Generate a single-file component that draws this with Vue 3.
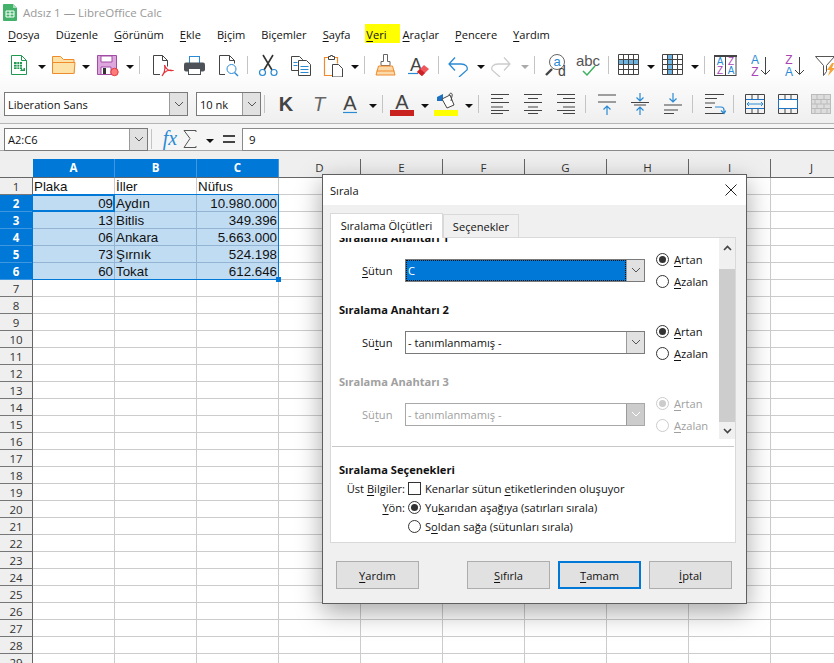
<template>
  <div class="app">
    <header class="titlebar">
      <svg class="logo" width="16" height="19" viewBox="0 0 16 19">
        <path d="M2 1h9l4 4v12a1 1 0 0 1-1 1H2a1 1 0 0 1-1-1V2a1 1 0 0 1 1-1z" fill="#43b16a" />
        <path d="M11 1l4 4h-4z" fill="#a6dcb8" />
        <path d="M4 8h8v6H4z" fill="none" stroke="#fff" />
        <path d="M4 11h8M8 8v6" stroke="#fff" />
      </svg>
      <span>Adsız 1 — LibreOffice Calc</span>
    </header>

    <nav class="menu">
      <span v-for="m in menu" :key="m.label">{{ m.before }}<u>{{ m.key }}</u>{{ m.after }}</span>
    </nav>

    <div class="toolbars">
      <div class="toolbar first">
        <template v-for="(t, i) in row1" :key="i">
          <i v-if="t.kind === 'arrow'" class="arrow" :class="{ off: t.off }" :style="{ marginLeft: t.gap + 'px' }"></i>
          <i v-else-if="t.kind === 'sep'" class="sep" :style="{ marginLeft: t.gap + 'px' }"></i>
          <svg v-else class="ic" width="24" height="24" viewBox="0 0 24 24" :style="{ marginLeft: t.gap + 'px' }" v-html="icons[t.kind]"></svg>
        </template>
      </div>
      <div class="toolbar second">
        <div class="combo font"><span>Liberation Sans</span><b class="drop"><svg width="10" height="6" viewBox="0 0 10 6"><path d="M1 1l4 4 4-4" fill="none" stroke="#555" /></svg></b></div>
        <div class="combo size"><span>10 nk</span><b class="drop"><svg width="10" height="6" viewBox="0 0 10 6"><path d="M1 1l4 4 4-4" fill="none" stroke="#555" /></svg></b></div>
        <template v-for="(t, i) in row2" :key="i">
          <i v-if="t.kind === 'arrow'" class="arrow" :style="{ marginLeft: t.gap + 'px' }"></i>
          <i v-else-if="t.kind === 'sep'" class="sep" :style="{ marginLeft: t.gap + 'px' }"></i>
          <svg v-else class="ic" width="24" height="24" viewBox="0 0 24 24" :style="{ marginLeft: t.gap + 'px' }" v-html="icons[t.kind]"></svg>
        </template>
      </div>
    </div>

    <div class="formula">
      <div class="combo name"><span>A2:C6</span><b class="drop"><svg width="10" height="6" viewBox="0 0 10 6"><path d="M1 1l4 4 4-4" fill="none" stroke="#555" /></svg></b></div>
      <i class="sep short"></i>
      <svg class="fx" width="20" height="24" viewBox="0 0 20 24">
        <text x="10" y="18" font-size="20" font-style="italic" text-anchor="middle" font-family="Liberation Serif, serif" fill="#2a8ad4">fx</text>
      </svg>
      <svg class="sigma" width="14" height="20" viewBox="0 0 14 20">
        <path d="M13 3V1.5H1l6 8-6 9h12V17" fill="none" stroke="#555" />
      </svg>
      <i class="arrow fa"></i>
      <svg class="eq" width="12" height="8" viewBox="0 0 12 8">
        <path d="M0 0h12v2H0zM0 6h12v2H0z" fill="#444" />
      </svg>
      <div class="input">9</div>
    </div>

    <div class="sheet">
      <div class="corner"></div>
      <div v-for="(c, i) in columns" :key="c" class="colhead" :class="{ on: i < 3 }">{{ c }}</div>
      <template v-for="r in 29" :key="r">
        <div class="rowhead" :class="{ on: r >= 2 && r <= 6 }">{{ r }}</div>
        <div
          v-for="(c, i) in columns"
          :key="c"
          class="cell"
          :class="{ sel: r >= 2 && r <= 6 && i < 3, num: r >= 2 && i !== 1 }"
        >{{ cellText(r, i) }}</div>
      </template>
      <div class="selection"></div>
      <div class="cursor"></div>
      <div class="handle"></div>
    </div>

    <section class="dialog">
      <div class="dlg-title">
        <span>Sırala</span>
        <svg width="12" height="12" viewBox="0 0 12 12"><path d="M.5.5l11 11M11.5.5l-11 11" stroke="#222" /></svg>
      </div>
      <div class="tabs">
        <div class="tab active">Sıralama Ölçütleri</div>
        <div class="tab">Seçenekler</div>
      </div>
      <div class="panel">
        <div class="keys">
          <div class="scroller">
            <div class="scroll-inner">
              <div v-for="k in sortKeys" :key="k.title" class="key" :class="{ off: k.off }">
                <div class="heading">{{ k.title }}</div>
                <div class="key-row">
                  <label class="col-label">{{ k.labelBefore }}<u>{{ k.labelKey }}</u>{{ k.labelAfter }}</label>
                  <div class="select" :class="{ focus: k.focus }">
                    <span>{{ k.value }}</span>
                    <b class="drop"><svg width="10" height="6" viewBox="0 0 10 6"><path d="M1 1l4 4 4-4" fill="none" stroke="currentColor" /></svg></b>
                  </div>
                  <div class="order">
                    <div class="opt"><i class="radio on"></i><span><u>A</u>rtan</span></div>
                    <div class="opt"><i class="radio"></i><span><u>A</u>zalan</span></div>
                  </div>
                </div>
              </div>
            </div>
          </div>
          <div class="scrollbar">
            <div class="sb-up"><svg width="9" height="6" viewBox="0 0 9 6"><path d="M1 5l3.5-3.500L8 5" fill="none" stroke="#444" stroke-width="1.6" /></svg></div>
            <div class="sb-thumb"></div>
            <div class="sb-down"><svg width="9" height="6" viewBox="0 0 9 6"><path d="M1 1l3.5 3.500L8 1" fill="none" stroke="#444" stroke-width="1.6" /></svg></div>
          </div>
        </div>
        <hr class="rule" />
        <div class="options">
          <div class="heading">Sıralama Seçenekleri</div>
          <div class="opt-row">
            <label class="opt-label">Üst <u>B</u>ilgiler:</label>
            <i class="check"></i>
            <span>Kenarlar sütun <u>e</u>tiketlerinden oluşuyor</span>
          </div>
          <div class="opt-row">
            <label class="opt-label"><u>Y</u>ön:</label>
            <i class="radio on"></i>
            <span>Yu<u>k</u>arıdan aşağıya (satırları sırala)</span>
          </div>
          <div class="opt-row">
            <label class="opt-label"></label>
            <i class="radio"></i>
            <span>S<u>o</u>ldan sağa (sütunları sırala)</span>
          </div>
        </div>
      </div>
      <footer class="buttons">
        <button class="btn"><u>Y</u>ardım</button>
        <div class="right">
          <button class="btn"><u>S</u>ıfırla</button>
          <button class="btn primary"><u>T</u>amam</button>
          <button class="btn"><u>İ</u>ptal</button>
        </div>
      </footer>
    </section>
  </div>
</template>

<script setup>
const menu = [
  { before: '', key: 'D', after: 'osya' },
  { before: 'Dü', key: 'z', after: 'enle' },
  { before: '', key: 'G', after: 'örünüm' },
  { before: '', key: 'E', after: 'kle' },
  { before: 'B', key: 'i', after: 'çim' },
  { before: 'Biçemler', key: '', after: '' },
  { before: '', key: 'S', after: 'ayfa' },
  { before: '', key: 'V', after: 'eri' },
  { before: '', key: 'A', after: 'raçlar' },
  { before: '', key: 'P', after: 'encere' },
  { before: '', key: 'Y', after: 'ardım' },
].map((m) => ({ label: m.before + m.key + m.after, ...m }))

const sans = 'font-family="Liberation Sans, sans-serif" text-anchor="middle"'
const table = 'M2.5 1.5h20v20h-20zM2.5 6.5h20M2.5 11.5h20M2.5 16.5h20M7.5 1.5v20M12.5 1.5v20M17.5 1.5v20'
const bricks = 'M2.5 2.5h19v19h-19zM2.5 7.5h19M2.5 16.5h19M9 2.5v5M15 2.5v5M9 16.5v5M15 16.5v5'

// toolbar icons, all on a 24px box
const icons = {
  new: `<path d="M4.5 2.5h10l5 5v14h-15z" fill="#fff" stroke="#1f9a50"/>
    <path d="M14.5 2.5v5h5" fill="none" stroke="#1f9a50"/>
    <path d="M7 9h8v7H7z" fill="#1f9a50"/>
    <path d="M7 11.5h8M7 14h8M10 9v7M12.500 9v7" stroke="#fff" stroke-width=".7"/>
    <path d="M13 18h5v-3h-1.500v1.500H15V15" fill="#1f9a50"/>`,
  open: `<path d="M.5 20.5V3.5h8l3 3h10.500v14z" fill="#fce2a6" stroke="#ef8b2c"/>
    <path d="M.5 9.5h22.500l-1 11" fill="#fce2a6" stroke="#ef8b2c"/>`,
  save: `<path d="M2.5 2.5h19v19h-19z" fill="#dda6dd" stroke="#a24da4"/>
    <path d="M6 3h11v6H6z" fill="#fff" stroke="#a24da4"/>
    <path d="M6 14h10v7.500H6z" fill="#fff" stroke="#a24da4"/>
    <path d="M8 15h3v6H8z" fill="#333"/>
    <circle cx="19.5" cy="19" r="3.7" fill="#ff7a7a" stroke="#e23b3b"/>`,
  pdf: `<path d="M10 21.5H3.5v-19h9l5 5v6M12.5 2.5v5h5" fill="none" stroke="#444"/>
    <path d="M12 23c4-5 2.500-11 2.500-11 1 4 5 6.500 8 5.500-3-1-8 0-10.500 5.500z" fill="none" stroke="#e3323b" stroke-width="1.2"/>`,
  print: `<rect x="7.5" y="3.5" width="10" height="7" fill="#fff" stroke="#2a8ad4"/>
    <rect x="2" y="9.5" width="21" height="9" rx="2" fill="#4d5258"/>
    <rect x="6.5" y="15.5" width="12" height="6" fill="#fff" stroke="#4d5258"/>`,
  preview: `<path d="M9 21.5H3.5v-19h10l5 5v3M13.5 2.5v5h5" fill="none" stroke="#444"/>
    <circle cx="15.5" cy="16" r="4.5" fill="#fff" stroke="#2a8ad4"/>
    <path d="M18.5 19.5l3.500 3.500" stroke="#2a8ad4" stroke-width="1.4"/>`,
  cut: `<path d="M7 2l9 15M17 2L8 17" stroke="#333" stroke-width="1.6" fill="none"/>
    <circle cx="6.5" cy="19.5" r="3" fill="none" stroke="#2a8ad4" stroke-width="1.2"/>
    <circle cx="18" cy="19.5" r="3" fill="none" stroke="#2a8ad4" stroke-width="1.2"/>`,
  copy: `<path d="M9 17.5H2.5v-14h8l3 3v1" fill="#fff" stroke="#444"/>
    <path d="M4.5 9.5h4M4.5 12.5h4" stroke="#2a8ad4"/>
    <path d="M9.5 7.5h8l4 4v11h-12z" fill="#fff" stroke="#444"/>
    <path d="M11.5 13.5h8M11.5 16.5h8M11.5 19.5h8" stroke="#2a8ad4"/>`,
  paste: `<path d="M11 22.5H3.5v-18h13v6" fill="none" stroke="#ef8b2c" stroke-width="1.2"/>
    <path d="M7.5 6.5v-3h2v-1h2v1h2v3z" fill="#fff" stroke="#444"/>
    <path d="M11.5 11.5h6l4 4v8.500h-10z" fill="#fff" stroke="#444"/>`,
  clone: `<path d="M10.5 1.5h4v7h2.500v4H8v-4h2.500z" fill="#fff" stroke="#666"/>
    <path d="M5.5 13h14l2.500 9H3z" fill="#fcd9a8" stroke="#ef8b2c"/>
    <path d="M3.5 18h18" stroke="#ef8b2c"/>`,
  clear: `<text x="9" y="18" font-size="18" ${sans} fill="#444">A</text>
    <path d="M1 20.5h10" stroke="#2a8ad4" stroke-width="1.2"/>
    <path d="M10 19l7-7 5 4-7 7z" fill="#f0575a"/>
    <path d="M10 19l3-3 5 4-3 3z" fill="#c92127"/>`,
  undo: `<path d="M9 4.5L3 11l6 6.500M3 11h12c5 0 7 3 6 6l-8 7" fill="none" stroke="#2a8ad4" stroke-width="1.3"/>`,
  redo: `<path d="M15 4.5L21 11l-6 6.500M21 11H9c-5 0-7 3-6 6l8 7" fill="none" stroke="#ccc" stroke-width="1.3"/>`,
  find: `<circle cx="13" cy="9" r="7.5" fill="none" stroke="#666"/>
    <text x="13" y="13" font-size="13" ${sans} fill="#2a8ad4">a</text>
    <path d="M2 22l6-6" stroke="#444" stroke-width="2.4"/>
    <text x="18" y="23" font-size="14" ${sans} fill="#444">d</text>`,
  spell: `<text x="12" y="13" font-size="15" ${sans} fill="#555">abc</text>
    <path d="M7 18l4 4 8-9" fill="none" stroke="#3cb05e" stroke-width="1.5"/>`,
  rows: `<rect x="2" y="6.5" width="21" height="5" fill="#6fb3e0"/><path d="${table}" fill="none" stroke="#444"/>`,
  cols: `<rect x="7.5" y="1.5" width="5" height="20" fill="#6fb3e0"/><path d="${table}" fill="none" stroke="#444"/>`,
  sort: `<rect x="1.5" y="3.5" width="21.5" height="19" fill="#fff" stroke="#444"/>
    <path d="M1 2h23v2H1zM12 4h1v18h-1z" fill="#444"/>
    <text x="7" y="12" font-size="10" ${sans} fill="#2a8ad4">A</text>
    <text x="7" y="21" font-size="10" ${sans} fill="#a844b4">Z</text>
    <text x="18" y="12" font-size="10" ${sans} fill="#a844b4">Z</text>
    <text x="18" y="21" font-size="10" ${sans} fill="#2a8ad4">A</text>`,
  az: `<text x="8" y="11" font-size="12" ${sans} fill="#2a8ad4">A</text>
    <text x="8" y="23" font-size="12" ${sans} fill="#a844b4">Z</text>
    <path d="M18.5 4v17M14 17l4.500 4.500L23 17" fill="none" stroke="#444"/>`,
  za: `<text x="8" y="11" font-size="12" ${sans} fill="#a844b4">Z</text>
    <text x="8" y="23" font-size="12" ${sans} fill="#2a8ad4">A</text>
    <path d="M18.5 4v17M14 17l4.500 4.500L23 17" fill="none" stroke="#444"/>`,
  filter: `<path d="M2.5 3.5h19l-8 9v6l-3 4v-10z" fill="#fff" stroke="#555"/>
    <path d="M19 10l-5 7h3l-2 6 7-8h-3l2-5z" fill="#f6a33a"/>`,

  bold: `<text x="12" y="19" font-size="20" font-weight="700" ${sans} fill="#444">K</text>`,
  italic: `<text x="12" y="19" font-size="20" font-style="italic" ${sans} fill="#666">T</text>`,
  under: `<text x="12" y="18" font-size="20" ${sans} fill="#444">A</text>
    <path d="M5 20.5h14" stroke="#2a8ad4" stroke-width="1.2"/>`,
  fontcolor: `<text x="12" y="17" font-size="20" ${sans} fill="#444">A</text>
    <rect y="18" width="24" height="6" fill="#c9211e"/>`,
  bucket: `<path d="M3 5l6-3v7H3z" fill="#1c71c2"/>
    <path d="M8 7l8-4 4 10-7 3z" fill="#fff" stroke="#444"/>
    <path d="M15 3c1-3 4-2 3 1l-1 5" fill="none" stroke="#444"/>
    <rect y="18" width="24" height="6" fill="#ff0"/>`,
  left: `<path d="M3 2.5h18M3 6.5h12M3 10.5h18M3 15h12M3 18.5h18M3 21.5h12" stroke="#444" stroke-width="1.2"/>`,
  center: `<path d="M3 2.5h18M7 6.5h10M3 10.5h18M7 15h10M3 18.5h18M7 21.5h10" stroke="#444" stroke-width="1.2"/>`,
  right: `<path d="M3 2.5h18M9 6.5h12M3 10.5h18M9 15h12M3 18.5h18M9 21.5h12" stroke="#444" stroke-width="1.2"/>`,
  vtop: `<path d="M3 3h18M3 10h18" stroke="#444" stroke-width="1.2"/>
    <path d="M12 23V14M8.5 17.5L12 14l3.500 3.500" fill="none" stroke="#2a8ad4" stroke-width="1.2"/>`,
  vmid: `<path d="M3 10.5h18M6 13h12" stroke="#444" stroke-width="1.2"/>
    <path d="M12 1v8M8.5 5.5L12 9l3.500-3.500M12 23v-8M8.5 18.500L12 15l3.500 3.500" fill="none" stroke="#2a8ad4" stroke-width="1.2"/>`,
  vbot: `<path d="M3 13h18M3 18h14M3 21.5h10" stroke="#444" stroke-width="1.2"/>
    <path d="M12 1v9M8.5 6.5L12 10l3.500-3.500" fill="none" stroke="#2a8ad4" stroke-width="1.2"/>`,
  wrap: `<path d="M3 2.5h19M3 6.5h12M3 11h10M3 15.5h7M3 21.5h19" stroke="#444" stroke-width="1.2"/>
    <path d="M13 15h6c2 0 3 1 3 3v3M19 18.500l3 3 2-3" fill="none" stroke="#2a8ad4" stroke-width="1.2"/>`,
  merge: `<path d="${bricks}" fill="none" stroke="#444"/>
    <path d="M3 7.5h18M3 16.5h18" stroke="#1c71c2"/>
    <path d="M4 12h16M6 10l-2 2 2 2M18 10l2 2-2 2" fill="none" stroke="#2a8ad4"/>`,
  merge2: `<path d="${bricks}" fill="none" stroke="#444"/>
    <path d="M2.5 7.5h19v9h-19z" fill="#fff" stroke="#1c71c2"/>`,
  brick: `<rect x="2.5" y="2.5" width="19" height="19" fill="#ddd" stroke="#bbb"/>
    <path d="M2.5 7.5h19M2.5 12h19M2.5 16.5h19M8 2.5v5M15 2.5v5M6 7.5V12M12 7.5V12M18 7.5V12M8 12v4.500M15 12v4.500M6 16.5v5M12 16.5v5M18 16.5v5" fill="none" stroke="#bbb"/>`,
}

// toolbar items are listed by the x of their centre; the gaps follow from that
const sizes = { arrow: 8, sep: 1 }
const place = (items, start) => {
  let end = start
  return items.map(([kind, x]) => {
    const w = sizes[kind] || 24
    const gap = Math.round(x - w / 2 - end)
    end += gap + w
    return { kind, gap, off: kind === 'arrow' && x === 525 }
  })
}

const row1 = place([
  ['new', 19], ['arrow', 42], ['open', 64], ['arrow', 86], ['save', 107], ['arrow', 130], ['sep', 139],
  ['pdf', 162], ['print', 194], ['preview', 228], ['sep', 247],
  ['cut', 268], ['copy', 301], ['paste', 333], ['arrow', 355], ['sep', 364],
  ['clone', 385], ['clear', 419], ['sep', 438],
  ['undo', 458], ['arrow', 481], ['redo', 501], ['arrow', 525], ['sep', 534],
  ['find', 556], ['spell', 588], ['sep', 608],
  ['rows', 628], ['arrow', 651], ['cols', 672], ['arrow', 695], ['sep', 704],
  ['sort', 725], ['az', 759], ['za', 793], ['filter', 825],
], 0)

const row2 = place([
  ['sep', 264], ['bold', 286], ['italic', 319], ['under', 350], ['arrow', 373], ['sep', 382],
  ['fontcolor', 402], ['arrow', 425], ['bucket', 446], ['arrow', 469], ['sep', 478],
  ['left', 500], ['center', 533], ['right', 566], ['sep', 585],
  ['vtop', 607], ['vmid', 640], ['vbot', 673], ['sep', 692],
  ['wrap', 714], ['sep', 733], ['merge', 755], ['merge2', 788], ['brick', 821],
], 261)

const columns = ['A', 'B', 'C', 'D', 'E', 'F', 'G', 'H', 'I', 'J']

const data = {
  1: ['Plaka', 'İller', 'Nüfus'],
  2: ['09', 'Aydın', '10.980.000'],
  3: ['13', 'Bitlis', '349.396'],
  4: ['06', 'Ankara', '5.663.000'],
  5: ['73', 'Şırnık', '524.198'],
  6: ['60', 'Tokat', '612.646'],
}
const cellText = (r, i) => (data[r] && data[r][i]) || ''

const sortKeys = [
  { title: 'Sıralama Anahtarı 1', labelBefore: '', labelKey: 'S', labelAfter: 'ütun', value: 'C', focus: true },
  { title: 'Sıralama Anahtarı 2', labelBefore: 'Sü', labelKey: 't', labelAfter: 'un', value: '- tanımlanmamış -' },
  { title: 'Sıralama Anahtarı 3', labelBefore: 'Sü', labelKey: 't', labelAfter: 'un', value: '- tanımlanmamış -', off: true },
]
</script>

<style>
html,
body {
  margin: 0;
  background: #fff;
}
</style>

<style scoped>
.app {
  position: relative;
  width: 834px;
  height: 663px;
  overflow: hidden;
  background: #fff;
  color: #111;
  font-family: "Open Sans", "Noto Sans", sans-serif;
  font-size: 11.1px;
}

u {
  text-underline-offset: 2px;
}

.titlebar {
  display: flex;
  align-items: center;
  gap: 5px;
  height: 24px;
  padding-left: 2px;
  color: #999;
  font-size: 11.5px;
}

.menu {
  display: flex;
  gap: 16px;
  height: 22px;
  padding-left: 8px;
  line-height: 22px;
  box-sizing: border-box;
}

/* the yellow marker someone drew over "Veri" */
.menu span:nth-child(8) {
  height: 19px;
  margin: 0 -13px 0 -1px;
  padding: 0 13px 0 1px;
  background: #ff0;
}

.toolbars {
  border-bottom: 1px solid #b5b5b5;
  background: linear-gradient(#fff, #fff 30%, #efefef);
}

.toolbar {
  display: flex;
  align-items: center;
  box-sizing: border-box;
}

.toolbar.first {
  height: 39px;
  align-items: flex-start;
  padding-top: 7px;
}

.toolbar.first .arrow {
  margin-top: 12px;
}

.toolbar.first .sep {
  margin-top: 3px;
}

.toolbar.second {
  height: 38px;
}

.toolbar.second .arrow {
  margin-top: 4px;
}

.ic {
  display: block;
  flex: none;
}

.arrow {
  flex: none;
  width: 0;
  height: 0;
  border-left: 4px solid transparent;
  border-right: 4px solid transparent;
  border-top: 4px solid #111;
}

.arrow.off {
  border-top-color: #aaa;
}

.sep {
  flex: none;
  width: 1px;
  height: 18px;
  background: #c4c4c4;
}

.combo {
  display: flex;
  flex: none;
  box-sizing: border-box;
  height: 24px;
  border: 1px solid #7a7a7a;
  background: #fff;
  line-height: 23px;
  padding-left: 3px;
}

.combo span {
  flex: 1;
}

.combo.font {
  width: 184px;
  margin-left: 4px;
}

.combo.size {
  width: 65px;
  margin-left: 8px;
}

.combo.name {
  width: 144px;
  height: 23px;
  margin-left: 4px;
  line-height: 21px;
}

.drop {
  display: flex;
  flex: none;
  align-items: center;
  justify-content: center;
  width: 17px;
  margin: 0 0 0 auto;
  border-left: 1px solid #9a9a9a;
  background: #e1e1e1;
}

.formula {
  display: flex;
  align-items: center;
  box-sizing: border-box;
  height: 27px;
  padding-top: 4px;
  border-bottom: 1px solid #a8a8a8;
  background: #f5f5f5;
}

.sep.short {
  height: 20px;
  margin-left: 3px;
}

.fx {
  margin-left: 8px;
}

.sigma {
  margin-left: 3px;
}

.arrow.fa {
  margin-left: 9px;
  margin-top: 3px;
}

.eq {
  margin-left: 9px;
}

.input {
  flex: 1;
  box-sizing: border-box;
  height: 23px;
  margin-left: 7px;
  padding-left: 6px;
  border: 1px solid #8a8a8a;
  border-right: none;
  background: #fff;
  line-height: 21px;
  font-size: 11.5px;
}

.sheet {
  position: relative;
  display: grid;
  grid-template-columns: 33px repeat(10, 82px);
  grid-template-rows: 27px repeat(29, 17px);
  background: #efefef;
}

.corner {
  border-bottom: 1px solid #666;
}

.colhead {
  margin-top: 8px;
  border-right: 1px solid #666;
  border-bottom: 1px solid #666;
  text-align: center;
  line-height: 18px;
  color: #333;
  font-size: 11.5px;
}

.colhead.on {
  background: #0078d7;
  border-right-color: #3f97df;
  color: #fff;
  font-weight: 700;
}

.rowhead {
  overflow: hidden;
  border-right: 1px solid #666;
  border-bottom: 1px solid #777;
  text-align: center;
  line-height: 17px;
  color: #333;
  font-size: 11.5px;
}

.rowhead.on {
  background: #0078d7;
  border-bottom-color: #3f97df;
  color: #fff;
  font-weight: 700;
}

.cell {
  overflow: hidden;
  box-sizing: border-box;
  padding: 0 1px;
  border-right: 1px solid #ccc;
  border-bottom: 1px solid #ccc;
  background: #fff;
  color: #111;
  white-space: nowrap;
  font-family: "Liberation Sans", sans-serif;
  font-size: 13.33px;
  line-height: 17px;
}

.cell.sel {
  background: #c0dcf3;
  border-color: #93b4d2;
}

.cell.num {
  text-align: right;
}

/* selection frame, cell cursor and drag handle sit on top of the cells */
.selection {
  position: absolute;
  left: 32px;
  top: 43px;
  box-sizing: border-box;
  width: 247px;
  height: 86px;
  border: 1px solid #0078d7;
  pointer-events: none;
}

.cursor {
  position: absolute;
  left: 32px;
  top: 43px;
  box-sizing: border-box;
  width: 83px;
  height: 18px;
  border: 2px solid #0078d7;
  border-left-width: 1px;
  pointer-events: none;
}

.handle {
  position: absolute;
  left: 276px;
  top: 126px;
  width: 5px;
  height: 5px;
  background: #0078d7;
}

.dialog {
  position: absolute;
  left: 322px;
  top: 174px;
  display: flex;
  flex-direction: column;
  box-sizing: border-box;
  width: 425px;
  height: 430px;
  border: 1px solid #5f5f5f;
  background: #f0f0f0;
  box-shadow: 0 8px 24px rgba(0, 0, 0, 0.35);
}

.dlg-title {
  display: flex;
  align-items: center;
  justify-content: space-between;
  height: 30px;
  padding: 0 9px 0 7px;
  background: #fff;
}

.tabs {
  display: flex;
  align-items: flex-end;
  margin: 8px 0 0 7px;
}

.tab {
  box-sizing: border-box;
  width: 76px;
  height: 23px;
  border: 1px solid #d9d9d9;
  border-bottom: none;
  text-align: center;
  line-height: 23px;
}

.tab.active {
  position: relative;
  z-index: 1;
  width: 113px;
  height: 25px;
  margin-bottom: -1px;
  background: #fff;
  line-height: 24px;
}

.panel {
  box-sizing: border-box;
  width: 406px;
  height: 306px;
  margin-left: 7px;
  border: 1px solid #d9d9d9;
  background: #fff;
}

.keys {
  display: flex;
  height: 201px;
}

.scroller {
  flex: 1;
  overflow: hidden;
}

.scroll-inner {
  margin-top: -9px;
}

.key {
  height: 72px;
}

.heading {
  height: 18px;
  padding-left: 8px;
  font-weight: 700;
  line-height: 18px;
}

.key-row {
  display: flex;
  align-items: center;
  height: 44px;
  margin-top: 1px;
  padding-left: 31px;
}

.col-label {
  width: 43px;
}

.select {
  display: flex;
  flex: none;
  box-sizing: border-box;
  width: 240px;
  height: 23px;
  border: 1px solid #7a7a7a;
  line-height: 21px;
  padding-left: 2px;
  color: #111;
}

.select span {
  flex: 1;
}

.select .drop {
  color: #555;
}

.select.focus span {
  margin: 0 0 0 -2px;
  padding-left: 2px;
  background: #0078d7;
  color: #fff;
  outline: 1px dotted #111;
  outline-offset: -1px;
}

.order {
  margin-left: 11px;
}

.opt {
  display: flex;
  align-items: center;
  gap: 5px;
  height: 22px;
}

.radio {
  display: flex;
  flex: none;
  align-items: center;
  justify-content: center;
  box-sizing: border-box;
  width: 13px;
  height: 13px;
  border: 1px solid #333;
  border-radius: 50%;
  background: #fff;
}

.radio.on::after {
  content: "";
  width: 7px;
  height: 7px;
  border-radius: 50%;
  background: #333;
}

.key.off,
.key.off .select {
  color: #a0a0a0;
}

.key.off .select {
  border-color: #a8a8a8;
}

.key.off .drop {
  background: #ccc;
  color: #fff;
}

.key.off .radio {
  border-color: #ccc;
}

.key.off .radio.on::after {
  background: #ccc;
}

.scrollbar {
  display: flex;
  flex: none;
  flex-direction: column;
  align-items: center;
  width: 16px;
  background: #f0f0f0;
}

.sb-up {
  display: flex;
  justify-content: center;
  height: 31px;
  padding-top: 7px;
  box-sizing: border-box;
}

.sb-thumb {
  width: 100%;
  height: 153px;
  background: #cdcdcd;
}

.sb-down {
  display: flex;
  align-items: center;
  height: 17px;
}

.rule {
  height: 1px;
  margin: 7px 1px 0;
  border: none;
  background: #c8c8c8;
}

.options .heading {
  margin-top: 14px;
}

.opt-row {
  display: flex;
  align-items: center;
  gap: 4px;
  height: 19px;
}

.opt-label {
  width: 74px;
  margin-right: -1px;
  text-align: right;
}

.check {
  flex: none;
  box-sizing: border-box;
  width: 13px;
  height: 13px;
  border: 1px solid #333;
  background: #fff;
}

.buttons {
  display: flex;
  justify-content: space-between;
  margin-top: 18px;
  padding: 0 14px 0 13px;
}

.right {
  display: flex;
  gap: 8px;
}

.btn {
  box-sizing: border-box;
  width: 83px;
  height: 28px;
  padding: 0;
  border: 1px solid #adadad;
  background: #e1e1e1;
  color: #111;
  font: inherit;
}

.btn.primary {
  border: 2px solid #0078d7;
}
</style>
